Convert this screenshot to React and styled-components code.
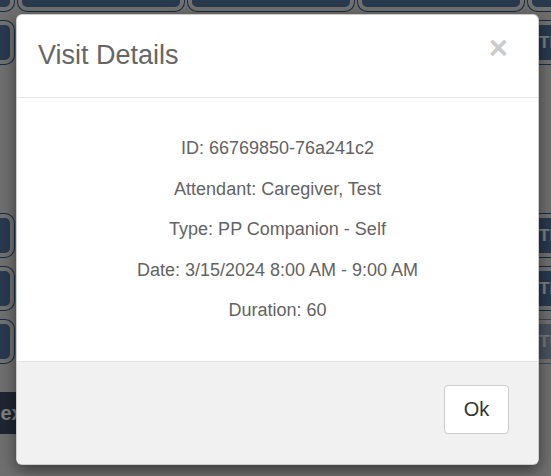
import React from "react";
import styled, { createGlobalStyle } from "styled-components";

const Global = createGlobalStyle`
  html, body { margin: 0; padding: 0; overflow: hidden; }
  body { font-family: "Liberation Sans", Arial, sans-serif; }
  * { box-sizing: border-box; }
`;

const Page = styled.div`
  position: relative;
  width: 551px;
  height: 476px;
  overflow: hidden;
  background: #dedede;
`;

const Board = styled.div`
  display: flex;
  flex-direction: column;
  margin-top: -32px;
`;

const Row = styled.div`
  display: flex;
  gap: 4px;
  margin-left: -152px;
  margin-top: ${(p) => p.$top || 0}px;
`;

const Tile = styled.div`
  flex: 0 0 166px;
  height: 43px;
  border-radius: 9px;
  background: #52729c;
  border: 4px solid #e2e2e2;
  box-shadow: 0 0 0 1px #2f5a82;
  color: #fff;
  font-weight: bold;
  font-size: 17px;
  display: flex;
  align-items: center;
  padding-left: 7px;
  white-space: nowrap;
  overflow: hidden;
  opacity: ${(p) => (p.$faded ? 0.55 : 1)};
`;

const NextButton = styled.div`
  margin-top: 29px;
  margin-left: -14px;
  width: 140px;
  height: 42px;
  background: #3a4c62;
  color: #fff;
  font-size: 20px;
  font-weight: bold;
  display: flex;
  align-items: center;
`;

const Overlay = styled.div`
  position: absolute;
  inset: 0;
  background: rgba(0, 0, 0, 0.5);
  padding: 14px 0 0 16px;
`;

const Modal = styled.div`
  width: 523px;
  height: 451px;
  background: #fff;
  border: 1px solid rgba(0, 0, 0, 0.2);
  border-radius: 6px;
  box-shadow: 0 5px 15px rgba(0, 0, 0, 0.5);
  display: flex;
  flex-direction: column;
  overflow: hidden;
  color: #666;
`;

const Header = styled.div`
  display: flex;
  justify-content: space-between;
  align-items: flex-start;
  padding: 25px 30px 27px 21px;
  border-bottom: 1px solid #e5e5e5;
`;

const Title = styled.h4`
  margin: 0;
  font-size: 27px;
  line-height: 30px;
  font-weight: normal;
  color: #666;
`;

const Close = styled.button`
  border: 0;
  background: none;
  padding: 0;
  margin-top: -9px;
  font-family: "Liberation Sans", Arial, sans-serif;
  font-size: 33px;
  font-weight: bold;
  line-height: 1;
  color: #000;
  opacity: 0.2;
  cursor: pointer;
`;

const Body = styled.div`
  flex: 1;
  display: flex;
  flex-direction: column;
  align-items: center;
  gap: 18px;
  padding: 39px 20px 0;
`;

const Line = styled.p`
  margin: 0;
  font-size: 18px;
  line-height: 22.5px;
  color: #636363;
`;

const Footer = styled.div`
  height: 103px;
  background: #f1f1f1;
  border-top: 1px solid #e3e3e3;
  display: flex;
  justify-content: flex-end;
  align-items: flex-start;
  padding: 23px 29px 0 0;
`;

const OkButton = styled.button`
  width: 65px;
  height: 49px;
  background: #fff;
  border: 1px solid #ccc;
  border-radius: 4px;
  font-family: "Liberation Sans", Arial, sans-serif;
  font-size: 20px;
  color: #333;
  cursor: pointer;
`;

const rows = [
  { top: 0, fadedLast: false },
  { top: 10, fadedLast: false },
  { top: 150, fadedLast: false },
  { top: 10, fadedLast: false },
  { top: 10, fadedLast: true },
];

const labels = ["", "", "", "", "TIMESHEET"];

const details = [
  "ID: 66769850-76a241c2",
  "Attendant: Caregiver, Test",
  "Type: PP Companion - Self",
  "Date: 3/15/2024 8:00 AM - 9:00 AM",
  "Duration: 60",
];

export default function App() {
  return (
    <>
      <Global />
      <Page>
        <Board>
          {rows.map((r, i) => (
            <Row key={i} $top={r.top}>
              {labels.map((l, j) => (
                <Tile key={j} $faded={r.fadedLast && j === labels.length - 1}>
                  {l}
                </Tile>
              ))}
            </Row>
          ))}
          <NextButton>Next</NextButton>
        </Board>
        <Overlay>
          <Modal role="dialog">
            <Header>
              <Title>Visit Details</Title>
              <Close aria-label="Close">×</Close>
            </Header>
            <Body>
              {details.map((d) => (
                <Line key={d}>{d}</Line>
              ))}
            </Body>
            <Footer>
              <OkButton>Ok</OkButton>
            </Footer>
          </Modal>
        </Overlay>
      </Page>
    </>
  );
}
